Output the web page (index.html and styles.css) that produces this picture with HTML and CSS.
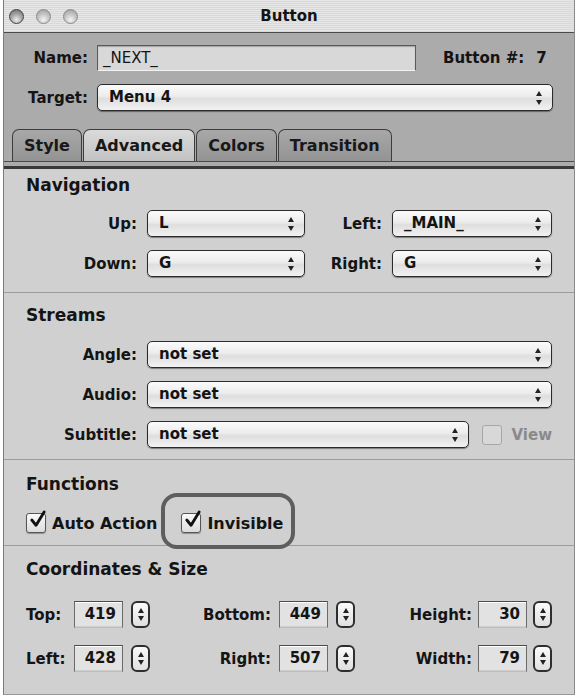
FILE: index.html
```html
<!DOCTYPE html>
<html lang="en">
<head>
  <meta charset="UTF-8" />
  <title>Button</title>
  <link rel="stylesheet" href="styles.css">
</head>
<body>
  <div class="window">
    <div class="titlebar">
      <div class="lights">
        <span class="light close"></span>
        <span class="light"></span>
        <span class="light"></span>
      </div>
      <div class="title">Button</div>
    </div>

    <div class="head">
      <div class="head-row">
        <label class="lbl">Name:</label>
        <div class="textfield name-field">_NEXT_</div>
        <span class="btn-num">Button #:<span class="num">7</span></span>
      </div>
      <div class="head-row">
        <label class="lbl">Target:</label>
        <div class="popup grow">Menu 4<span class="arrows"></span></div>
      </div>
      <div class="tabs">
        <div class="tab">Style</div>
        <div class="tab active">Advanced</div>
        <div class="tab">Colors</div>
        <div class="tab">Transition</div>
      </div>
    </div>
    <div class="tab-rule"></div>

    <div class="content">
      <section class="sect sect-nav">
        <h2>Navigation</h2>
        <div class="nav-grid">
          <label class="lbl">Up:</label>
          <div class="popup">L<span class="arrows"></span></div>
          <label class="lbl">Left:</label>
          <div class="popup">_MAIN_<span class="arrows"></span></div>
          <label class="lbl">Down:</label>
          <div class="popup">G<span class="arrows"></span></div>
          <label class="lbl">Right:</label>
          <div class="popup">G<span class="arrows"></span></div>
        </div>
      </section>

      <section class="sect sect-streams">
        <h2>Streams</h2>
        <div class="stream-grid">
          <label class="lbl">Angle:</label>
          <div class="popup">not set<span class="arrows"></span></div>
          <label class="lbl">Audio:</label>
          <div class="popup">not set<span class="arrows"></span></div>
          <label class="lbl">Subtitle:</label>
          <div class="subtitle-row">
            <div class="popup grow">not set<span class="arrows"></span></div>
            <span class="check disabled"></span>
            <span class="view">View</span>
          </div>
        </div>
      </section>

      <section class="sect sect-func">
        <h2>Functions</h2>
        <div class="func-row">
          <div class="check-item">
            <span class="check on"><svg viewBox="0 0 20 20"><path d="M4 9.5 L8.5 15 L17 1"/></svg></span>
            <span>Auto Action</span>
          </div>
          <div class="check-item ringed">
            <span class="check on"><svg viewBox="0 0 20 20"><path d="M4 9.5 L8.5 15 L17 1"/></svg></span>
            <span>Invisible</span>
          </div>
        </div>
      </section>

      <section class="sect sect-coords">
        <h2>Coordinates &amp; Size</h2>
        <div class="coord-row">
          <div class="coord g1"><label class="lbl">Top:</label><div class="numfield">419</div><span class="stepper"></span></div>
          <div class="coord g2"><label class="lbl">Bottom:</label><div class="numfield">449</div><span class="stepper"></span></div>
          <div class="coord g3"><label class="lbl">Height:</label><div class="numfield">30</div><span class="stepper"></span></div>
        </div>
        <div class="coord-row">
          <div class="coord g1"><label class="lbl">Left:</label><div class="numfield">428</div><span class="stepper"></span></div>
          <div class="coord g2"><label class="lbl">Right:</label><div class="numfield">507</div><span class="stepper"></span></div>
          <div class="coord g3"><label class="lbl">Width:</label><div class="numfield">79</div><span class="stepper"></span></div>
        </div>
      </section>
    </div>
  </div>
</body>
</html>
```

FILE: styles.css
```css
body {
  margin: 0;
  background: #fff;
  font-family: "DejaVu Sans", "Liberation Sans", sans-serif;
  color: #141414;
}

.window {
  margin-left: 3px;
  width: 572px;
  height: 695px;
  box-sizing: border-box;
  border-left: 1px solid #7a7a7a;
  border-right: 1px solid #8a8a8a;
  border-bottom: 1px solid #999;
  display: flex;
  flex-direction: column;
  background: #d0d0d0;
}

/* title bar */
.titlebar {
  height: 32px;
  flex-shrink: 0;
  border-bottom: 1px solid #4a4a4a;
  background: repeating-linear-gradient(#e6e6e6 0 1px, #d9d9d9 1px 2px);
  display: flex;
  align-items: center;
  position: relative;
}

.lights {
  display: flex;
  gap: 12px;
  padding-left: 5px;
}

.light {
  width: 13px;
  height: 13px;
  border-radius: 50%;
  border: 1px solid #8a8a8a;
  background: radial-gradient(circle at 50% 75%, #f4f4f4 0, #c8c8c8 45%, #9a9a9a 100%);
}

.light.close {
  border-color: #444;
  background: radial-gradient(circle at 50% 75%, #eee 0, #aaa 45%, #666 100%);
}

.title {
  position: absolute;
  left: 0;
  right: 0;
  text-align: center;
  font-weight: bold;
  font-size: 15px;
}

/* header */
.head {
  background: #ababab;
  padding: 12px 21px 0 0;
  display: flex;
  flex-direction: column;
  gap: 13px;
}

.head-row {
  display: flex;
  align-items: center;
}

.lbl {
  font-weight: bold;
  font-size: 15px;
  text-align: right;
  white-space: nowrap;
}

.head-row .lbl {
  width: 84px;
  margin-right: 9px;
}

.textfield {
  height: 26px;
  box-sizing: border-box;
  background: #d8d8d8;
  border: 1px solid #5a5a5a;
  border-bottom-color: #f2f2f2;
  box-shadow: inset 0 1px 1px rgba(0, 0, 0, .25);
  font-size: 15px;
  line-height: 24px;
  padding-left: 5px;
}

.name-field {
  width: 319px;
}

.btn-num {
  margin-left: 27px;
  font-weight: bold;
  font-size: 15px;
}

.btn-num .num {
  margin-left: 12px;
}

.popup {
  height: 27px;
  box-sizing: border-box;
  border: 1px solid #2b2b2b;
  border-radius: 5px;
  background: linear-gradient(#fbfbfb, #ececec 45%, #dedede 55%, #f2f2f2);
  box-shadow: 0 1px 1px rgba(0, 0, 0, .4);
  font-weight: bold;
  font-size: 15px;
  line-height: 25px;
  padding-left: 11px;
  position: relative;
}

.grow {
  flex: 1;
}

.arrows {
  position: absolute;
  right: 9px;
  top: 6px;
  width: 7px;
  height: 14px;
}

.arrows::before,
.arrows::after {
  content: "";
  position: absolute;
  left: 0;
  border-left: 3.5px solid transparent;
  border-right: 3.5px solid transparent;
}

.arrows::before {
  top: 0;
  border-bottom: 5px solid #222;
}

.arrows::after {
  bottom: 0;
  border-top: 5px solid #222;
}

/* tabs */
.tabs {
  display: flex;
  gap: 1px;
  margin-top: 5px;
  margin-right: -21px;
  padding-left: 8px;
  border-bottom: 1px solid #4a4a4a;
}

.tab {
  height: 31px;
  padding: 0 11px;
  border: 1px solid #3c3c3c;
  border-bottom: none;
  border-radius: 7px 7px 0 0;
  background: linear-gradient(#a8a8a8, #939393);
  font-weight: bold;
  font-size: 16px;
  line-height: 31px;
  color: #181818;
}

.tab.active {
  background: linear-gradient(#dadada, #c2c2c2);
}

.tab-rule {
  flex-shrink: 0;
  height: 4px;
  background: #ababab;
  border-bottom: 3px solid #3a3a3a;
}

/* sections */
.content {
  flex: 1;
  display: flex;
  flex-direction: column;
}

.sect {
  padding: 11px 22px 11px;
  border-bottom: 1px solid #9c9c9c;
}

.sect:last-child {
  border-bottom: none;
  flex: 1;
}

.sect h2 {
  margin: 0 0 16px;
  font-size: 17px;
  line-height: 20px;
  font-weight: bold;
}

.sect-nav {
  padding-top: 6px;
  padding-bottom: 15px;
}

.sect-nav h2 {
  margin-bottom: 15px;
}

.nav-grid {
  display: grid;
  grid-template-columns: 111px 158px 67px 1fr;
  gap: 13px 10px;
  align-items: center;
}

.sect-streams {
  padding-top: 12px;
}

.stream-grid {
  display: grid;
  grid-template-columns: 111px 1fr;
  gap: 13px 10px;
  align-items: center;
}

.subtitle-row {
  display: flex;
  align-items: center;
}

.check {
  width: 20px;
  height: 20px;
  box-sizing: border-box;
  border: 1px solid #555;
  border-radius: 3px;
  background: linear-gradient(#fafafa, #dcdcdc);
  box-shadow: 0 1px 1px rgba(0, 0, 0, .3);
  position: relative;
  flex-shrink: 0;
}

.check svg {
  position: absolute;
  left: 1px;
  top: -3px;
  width: 19px;
  height: 19px;
  overflow: visible;
}

.check svg path {
  fill: none;
  stroke: #111;
  stroke-width: 3;
  stroke-linecap: round;
  stroke-linejoin: round;
}

.check.disabled {
  margin-left: 13px;
  border-color: #a6a6a6;
  background: #d8d8d8;
  box-shadow: none;
}

.view {
  margin-left: 9px;
  font-weight: bold;
  font-size: 15px;
  color: #8a8a8a;
}

.sect-func {
  padding-top: 14px;
  padding-bottom: 12px;
}

.sect-func h2 {
  margin-bottom: 19px;
}

.func-row {
  display: flex;
  align-items: center;
  gap: 24px;
}

.check-item {
  display: flex;
  align-items: center;
  gap: 6px;
  font-weight: bold;
  font-size: 16px;
}

.ringed {
  position: relative;
}

.ringed::after {
  content: "";
  position: absolute;
  left: -20px;
  right: -12px;
  top: -20px;
  bottom: -16px;
  border: 4px solid #5e5e5e;
  border-radius: 16px;
}

.sect-coords {
  padding-top: 13px;
}

.sect-coords h2 {
  margin-bottom: 22px;
}

.coord-row {
  display: flex;
  justify-content: space-between;
  margin-bottom: 17px;
}

.coord {
  display: flex;
  align-items: center;
  gap: 8px;
}

.g1 .lbl { width: 40px; text-align: left; }
.g2 .lbl { width: 70px; }
.g3 .lbl { width: 66px; }
.g3 { gap: 6px; }

.numfield {
  width: 49px;
  height: 27px;
  box-sizing: border-box;
  background: #e2e2e2;
  border: 1px solid #6a6a6a;
  border-top-color: #4a4a4a;
  border-bottom-color: #bdbdbd;
  box-shadow: inset 0 1px 0 #fff, inset 0 -1px 0 #cfcfcf;
  font-weight: bold;
  font-size: 15px;
  line-height: 25px;
  text-align: right;
  padding-right: 6px;
}

.stepper {
  width: 19px;
  height: 27px;
  box-sizing: border-box;
  border: 2px solid #2e2e2e;
  border-radius: 6px;
  background: linear-gradient(#fafafa, #e0e0e0);
  position: relative;
}

.stepper::before,
.stepper::after {
  content: "";
  position: absolute;
  left: 5px;
  border-left: 3px solid transparent;
  border-right: 3px solid transparent;
}

.stepper::before {
  top: 5px;
  border-bottom: 5px solid #222;
}

.stepper::after {
  bottom: 5px;
  border-top: 5px solid #222;
}
```
